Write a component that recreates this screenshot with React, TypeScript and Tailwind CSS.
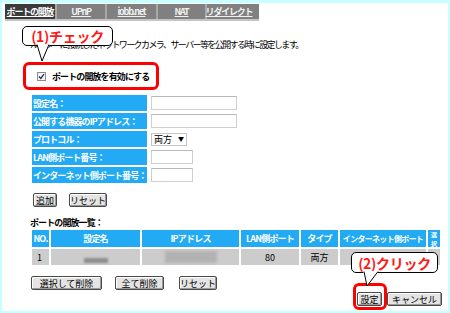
import React from "react";

const jp = "font-['Noto_Sans_CJK_JP','Noto_Sans_CJK_SC',sans-serif]";

const tabs = [
  { name: "ポートの開放", w: "w-[50px]", active: true },
  { name: "UPnP", w: "w-[50px]" },
  { name: "iobb.net", w: "w-[51px]" },
  { name: "NAT", w: "w-[49px]" },
  { name: "リダイレクト", w: "w-[46px]" },
];

const formRows = [
  { label: "設定名：", field: "text", w: "w-[86px]" },
  { label: "公開する機器のIPアドレス：", field: "text", w: "w-[86px]" },
  { label: "プロトコル：", field: "select", w: "w-[36px]" },
  { label: "LAN側ポート番号：", field: "text", w: "w-[42px]" },
  { label: "インターネット側ポート番号：", field: "text", w: "w-[42px]" },
];

const headers = ["NO.", "設定名", "IPアドレス", "LAN側ポート", "タイプ"];

function Btn({ children, w }: { children: React.ReactNode; w: string }) {
  return (
    <div
      className={`${w} flex h-[14px] items-center justify-center whitespace-nowrap rounded-[2px] border border-[#4a4a4a] bg-[#e4e4e4] text-[9px] leading-none text-black shadow-[inset_-1px_-1px_0_#9a9a9a,inset_1px_1px_0_#ffffff]`}
    >
      {children}
    </div>
  );
}

export default function App() {
  return (
    <div
      className={`relative h-[313px] w-[450px] overflow-hidden border-b-2 border-l-2 border-r-2 border-t-[3px] border-[#c8ffff] bg-white ${jp}`}
    >
      <div className="flex flex-col">
        {/* Tabs */}
        <div className="ml-[3px] mt-[1px] flex h-[17px] w-[254px] border-b-2 border-[#c4c4c4] bg-[#808080]">
          {tabs.map((t, i) => (
            <div
              key={t.name}
              className={`${t.w} flex items-center justify-center whitespace-nowrap ${
                i > 0 ? "border-l-2 border-[#a8a8a8]" : ""
              } ${t.active ? "bg-[#3a3a3a] text-white" : "text-[#f2f2f2]"} text-[9px] font-bold leading-none tracking-[-1.2px] underline`}
            >
              {t.name}
            </div>
          ))}
        </div>

        {/* Description */}
        <p className="ml-[28px] mt-[18px] h-[12px] whitespace-nowrap text-[9px] leading-[12px] tracking-[-1.6px] text-black">
          ルーターに接続したネットワークカメラ、サーバー等を公開する時に設定します。
        </p>

        {/* Enable checkbox, highlighted */}
        <div className="ml-[21px] mt-[11px] flex h-[28px] w-[136px] items-center rounded-[6px] border-[3px] border-[#ff0000] pl-[11px]">
          <svg width="9" height="9" viewBox="0 0 9 9">
            <rect x="0.5" y="0.5" width="8" height="8" fill="#f4f4f4" stroke="#8c8c8c" />
            <path d="M2 4.5 L3.8 6.5 L7 2.2" fill="none" stroke="#222a6b" strokeWidth="1.3" />
          </svg>
          <span className="ml-[6px] whitespace-nowrap text-[9px] font-bold leading-none tracking-[-0.9px] text-black">
            ポートの開放を有効にする
          </span>
        </div>

        {/* Form */}
        <div className="ml-[30px] mt-[5px] flex flex-col gap-[2px]">
          {formRows.map((r) => (
            <div key={r.label} className="flex h-[16px] items-center">
              <div className="flex h-full w-[115px] items-center whitespace-nowrap bg-[#22aaf5] pl-[1px] text-[9px] font-bold leading-none tracking-[-0.9px] text-white">
                {r.label}
              </div>
              {r.field === "select" ? (
                <div className="ml-[4px] flex h-[13px] w-[36px] items-center justify-between border border-[#c4c4c4] bg-white px-[2px] text-[9px] leading-none">
                  <span>両方</span>
                  <span className="text-[6px]">▼</span>
                </div>
              ) : (
                <div className={`ml-[4px] h-[14px] ${r.w} border border-[#cfcfcf] border-t-[#b8b8b8] bg-white`} />
              )}
            </div>
          ))}
        </div>

        {/* Add / reset */}
        <div className="ml-[31px] mt-[10px] flex gap-[12px]">
          <Btn w="w-[24px]">追加</Btn>
          <Btn w="w-[38px]">リセット</Btn>
        </div>

        {/* List title */}
        <p className="ml-[28px] mt-[10px] h-[12px] whitespace-nowrap text-[9px] font-bold leading-[12px] tracking-[-0.9px] text-black">
          ポートの開放一覧：
        </p>

        {/* Table */}
        <div className="ml-[30px] mt-[1px] grid grid-cols-[17px_89px_97px_58px_37px_86px_12px] gap-[2px] text-[9px] leading-none">
          {headers.map((h) => (
            <div
              key={h}
              className="flex h-[17px] items-center justify-center whitespace-nowrap bg-[#22aaf5] font-bold tracking-[-0.8px] text-white"
            >
              {h}
            </div>
          ))}
          <div className="flex h-[17px] items-center justify-center overflow-hidden whitespace-nowrap bg-[#22aaf5] text-[8px] font-bold tracking-[-0.7px] text-white">
            インターネット側ポート
          </div>
          <div className="flex h-[17px] flex-col items-center justify-center bg-[#22aaf5] text-[6px] font-bold leading-[9px] text-white">
            <span>選</span>
            <span>択</span>
          </div>

          <div className="flex h-[16px] items-center bg-[#cccccc] pl-[5px]">1</div>
          <div className="flex h-[16px] items-end justify-center bg-[#cccccc] pb-[2px]">
            <div className="h-[5px] w-[24px] bg-[#8e8e8e] blur-[1px]" />
          </div>
          <div className="flex h-[16px] items-center justify-center bg-[#cccccc]">
            <div className="h-[12px] w-[52px] bg-[#b2b2b2] blur-[1.5px]" />
          </div>
          <div className="flex h-[16px] items-center justify-center bg-[#cccccc]">80</div>
          <div className="flex h-[16px] items-center justify-center bg-[#cccccc]">両方</div>
          <div className="h-[16px] bg-[#cccccc]" />
          <div className="h-[16px] bg-[#cccccc]" />
        </div>

        {/* Delete buttons */}
        <div className="ml-[29px] mt-[11px] flex">
          <Btn w="w-[71px]">選択して削除</Btn>
          <div className="ml-[13px]">
            <Btn w="w-[49px]">全て削除</Btn>
          </div>
          <div className="ml-[15px]">
            <Btn w="w-[38px]">リセット</Btn>
          </div>
        </div>

        {/* Submit */}
        <div className="mr-[6px] mt-[2px] flex justify-end gap-[5px]">
          <Btn w="w-[25px]">設定</Btn>
          <Btn w="w-[55px]">キャンセル</Btn>
        </div>
      </div>

      {/* Red frame round the submit button */}
      <div className="absolute left-[351px] top-[280px] h-[27px] w-[34px] rounded-[6px] border-[3px] border-[#ff0000]" />

      {/* Callouts */}
      <div className="absolute left-[20px] top-[23px] h-[20px] w-[91px]">
        <div className="flex h-full w-full items-center justify-center whitespace-nowrap rounded-[5px] border border-black bg-white text-[14px] font-bold leading-none tracking-[-0.3px] text-[#ff1a1a]">
          (1)チェック
        </div>
        <svg className="absolute left-[14px] top-[18px]" width="15" height="19" viewBox="0 0 15 19">
          <polygon points="1,0 14,0 6,17" fill="white" />
          <path d="M1 0.5 L6 17 L13 0.5" fill="none" stroke="black" strokeWidth="1" />
        </svg>
      </div>

      <div className="absolute left-[349px] top-[249px] h-[21px] w-[87px]">
        <div className="flex h-full w-full items-center justify-center whitespace-nowrap rounded-[5px] border border-black bg-white text-[14px] font-bold leading-none tracking-[-0.3px] text-[#ff1a1a]">
          (2)クリック
        </div>
        <svg className="absolute left-[11px] top-[19px]" width="18" height="16" viewBox="0 0 18 16">
          <polygon points="1,0 17,0 5,15" fill="white" />
          <path d="M2 0.5 L5 15 L16 0.5" fill="none" stroke="black" strokeWidth="1" />
        </svg>
      </div>
    </div>
  );
}
